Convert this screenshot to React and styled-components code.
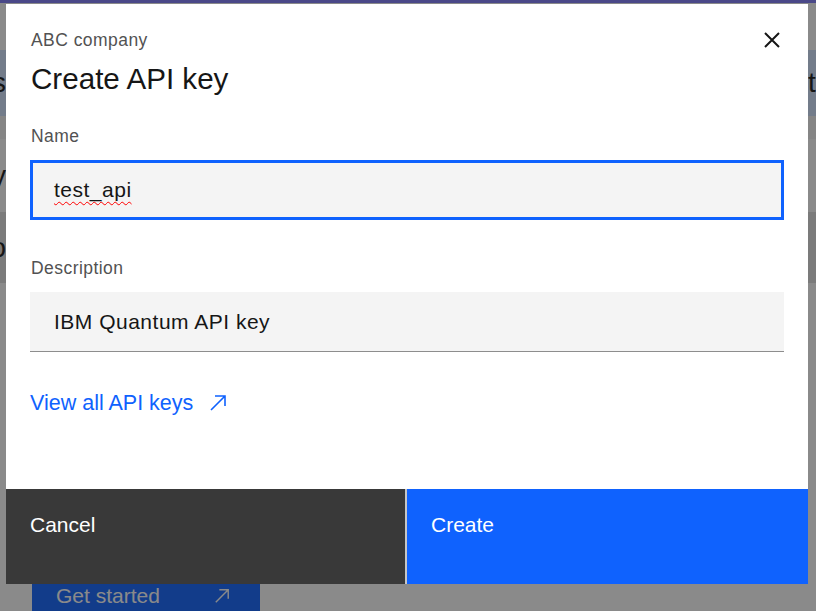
import React from 'react';
import styled, { createGlobalStyle } from 'styled-components';

const GlobalStyle = createGlobalStyle`
    html, body {
        margin: 0;
        padding: 0;
        background: #ffffff;
        font-family: 'Liberation Sans', Arial, sans-serif;
        overflow: hidden;
    }
    * {
        box-sizing: border-box;
    }
`;

// ---------- page behind the dialog ----------

const Page = styled.div`
    width: 816px;
    height: 611px;
    overflow: hidden;
    display: flex;
    flex-direction: column;
    background: #ffffff;
    color: #161616;
`;

const TopStrip = styled.div`
    height: 3px;
    background: #7e7afa;
`;

const Band = styled.div`
    height: ${(props) => props.h}px;
    flex-shrink: 0;
    background: ${(props) => props.bg || '#ffffff'};
    display: flex;
    align-items: center;
    justify-content: space-between;
    font-size: 28px;
`;

const EdgeLeft = styled.div`
    width: 6px;
    display: flex;
    justify-content: flex-end;
    white-space: nowrap;
`;

const EdgeRight = styled.div`
    width: 8px;
    display: flex;
    justify-content: flex-start;
    white-space: nowrap;
`;

const Spacer = styled.div`
    flex: 1;
`;

const StartedRow = styled.div`
    padding-left: 32px;
`;

const StartedButton = styled.div`
    width: 228px;
    height: 42px;
    background: #0f62fe;
    color: #ffffff;
    font-size: 21px;
    display: flex;
    justify-content: space-between;
    padding: 14px 30px 0 24px;
    line-height: 26px;

    svg {
        margin-top: 5px;
    }
`;

// ---------- dialog ----------

const Overlay = styled.div`
    position: fixed;
    inset: 0;
    background: rgba(22, 22, 22, 0.5);
    display: flex;
    align-items: flex-start;
    padding: 4px 0 0 6px;
`;

const Modal = styled.div`
    width: 802px;
    height: 580px;
    background: #ffffff;
    display: flex;
    flex-direction: column;
`;

const Header = styled.div`
    position: relative;
    padding: 24px 24px 0 25px;
`;

const Eyebrow = styled.div`
    font-size: 17.5px;
    line-height: 24px;
    letter-spacing: 0.45px;
    color: #525252;
`;

const Title = styled.div`
    margin-top: 6px;
    font-size: 29.6px;
    line-height: 42px;
    color: #161616;
`;

const Close = styled.button`
    position: absolute;
    top: 0;
    right: 0;
    width: 72px;
    height: 72px;
    border: none;
    background: transparent;
    padding: 0;
    display: flex;
    align-items: center;
    justify-content: center;
    color: #161616;
`;

const Body = styled.div`
    flex: 1;
    padding: 24px 24px 0 24px;
`;

const Field = styled.div`
    margin-bottom: 36px;
`;

const Label = styled.div`
    font-size: 17.5px;
    line-height: 24px;
    letter-spacing: 0.45px;
    color: #525252;
    margin-bottom: 12px;
    padding-left: 1px;
`;

const InputBox = styled.div`
    height: 60px;
    background: #f4f4f4;
    display: flex;
    align-items: center;
    font-size: 21px;
    letter-spacing: 0.5px;
    color: #161616;
    border: ${(props) => (props.focused ? '3px solid #0f62fe' : 'none')};
    border-bottom: ${(props) => (props.focused ? '3px solid #0f62fe' : '1.5px solid #8d8d8d')};
    padding: 0 24px 0 ${(props) => (props.focused ? '21px' : '24px')};
`;

const Misspelled = styled.span`
    text-decoration: underline wavy #ff0000;
    text-decoration-thickness: 1.2px;
    text-underline-offset: 4px;
`;

const Link = styled.a`
    display: inline-flex;
    align-items: center;
    gap: 16px;
    font-size: 21.5px;
    line-height: 30px;
    color: #0f62fe;
    text-decoration: none;
`;

const Footer = styled.div`
    height: 95px;
    display: grid;
    grid-template-columns: 399px 1fr;
    gap: 2px;
    background: #c6c6c6;
`;

const FooterButton = styled.button`
    border: none;
    margin: 0;
    display: flex;
    align-items: flex-start;
    padding: 21px 24px;
    font-family: 'Liberation Sans', Arial, sans-serif;
    font-size: 21px;
    line-height: 30px;
    color: #ffffff;
    background: ${(props) => (props.primary ? '#0f62fe' : '#393939')};
`;

const Launch = ({ size = 18, color = 'currentColor' }) => (
    <svg width={size} height={size} viewBox='0 0 18 18' fill='none'>
        <path d='M2 16 L16 2 M6 2 H16 V12' stroke={color} strokeWidth='1.6' />
    </svg>
);

const CloseIcon = () => (
    <svg width='18' height='18' viewBox='0 0 18 18' fill='none'>
        <path d='M2 2 L16 16 M16 2 L2 16' stroke='#161616' strokeWidth='2' />
    </svg>
);

const App = () => {
    return (
        <>
            <GlobalStyle />
            <Page>
                <TopStrip />
                <Band h={47} />
                <Band h={66} bg='#d0e2ff'>
                    <EdgeLeft>
                        <span>API keys</span>
                    </EdgeLeft>
                    <EdgeRight>
                        <span>test</span>
                    </EdgeRight>
                </Band>
                <Band h={23} bg='#f4f4f4' />
                <Band h={73}>
                    <EdgeLeft>
                        <span>Quantum key</span>
                    </EdgeLeft>
                </Band>
                <Band h={71} bg='#e0e0e0'>
                    <EdgeLeft>
                        <span>Info</span>
                    </EdgeLeft>
                </Band>
                <Spacer />
                <StartedRow>
                    <StartedButton>
                        <span>Get started</span>
                        <Launch size={16} />
                    </StartedButton>
                </StartedRow>
            </Page>
            <Overlay>
                <Modal>
                    <Header>
                        <Eyebrow>ABC company</Eyebrow>
                        <Title>Create API key</Title>
                        <Close aria-label='close'>
                            <CloseIcon />
                        </Close>
                    </Header>
                    <Body>
                        <Field>
                            <Label>Name</Label>
                            <InputBox focused>
                                <Misspelled>test_api</Misspelled>
                            </InputBox>
                        </Field>
                        <Field>
                            <Label>Description</Label>
                            <InputBox>IBM Quantum API key</InputBox>
                        </Field>
                        <Link href='#'>
                            View all API keys
                            <Launch size={18} />
                        </Link>
                    </Body>
                    <Footer>
                        <FooterButton>Cancel</FooterButton>
                        <FooterButton primary>Create</FooterButton>
                    </Footer>
                </Modal>
            </Overlay>
        </>
    );
};

export default App;
